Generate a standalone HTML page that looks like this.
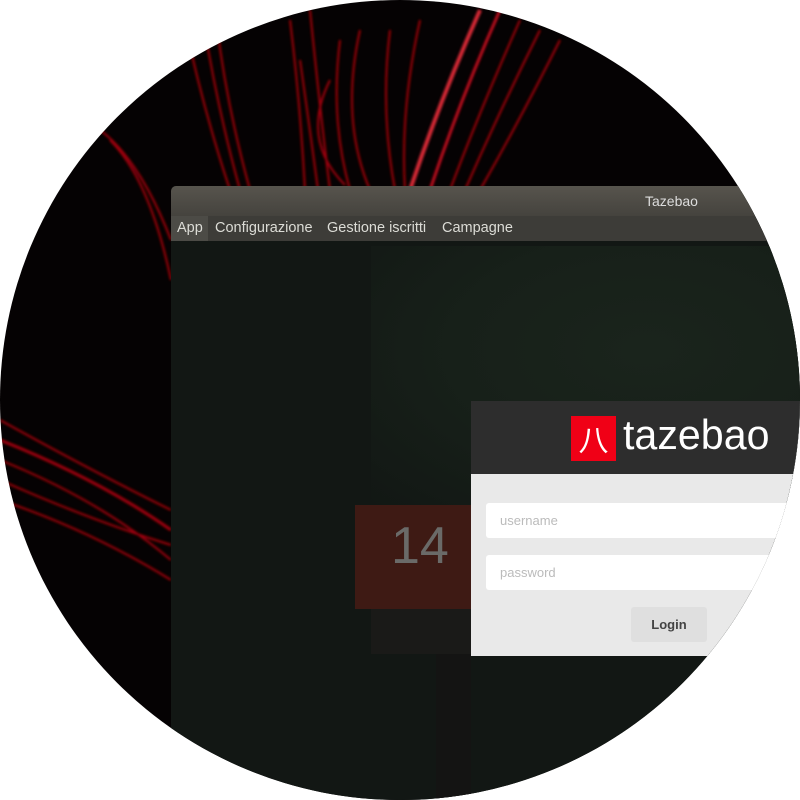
<!DOCTYPE html>
<html><head><meta charset="utf-8"><style>
html,body{margin:0;padding:0;background:#fff;width:800px;height:800px;overflow:hidden}
.c{position:absolute;left:0;top:0;width:800px;height:800px;border-radius:50%;overflow:hidden;background:#050203}
.win{position:absolute;left:171px;top:186px;width:640px;height:620px;background:#121714;border-radius:5px 5px 0 0;overflow:hidden}
.tb{height:30px;background:linear-gradient(#57544d,#45433e);color:#ddd;font:14px "Liberation Sans",sans-serif;}
.tb span{position:absolute;left:474px;top:7px}
.menu{height:25px;background:#3d3c38;color:#dcdcd6;font:14.5px "Liberation Sans",sans-serif;position:relative;z-index:2}
.menu span{position:absolute;top:4px}
.menu .app{left:0;top:0;width:37px;height:25px;background:#4c4b46}
.login{position:absolute;left:471px;top:401px;width:340px;height:255px;background:#e9e9e9}
.lh{height:73px;background:#2d2d2d;position:relative}
.logo{position:absolute;left:100px;top:15px;width:45px;height:45px;background:#f00016;color:#fff;font:30px "Noto Sans CJK SC",sans-serif;text-align:center;line-height:44px}
.lt{position:absolute;left:152px;top:10px;color:#fff;font:300 42px "Liberation Sans",sans-serif;transform:scaleX(0.98);transform-origin:left}
.in{position:absolute;left:15px;width:330px;height:35px;background:#fff;border-radius:3px;color:#bbb;font:13px "Liberation Sans",sans-serif;line-height:35px;text-indent:14px}
.btn{position:absolute;left:160px;top:206px;width:76px;height:35px;background:#dfdfdf;border-radius:3px;color:#444;font:bold 13px "Liberation Sans",sans-serif;text-align:center;line-height:35px}
</style></head><body>
<div class="c">
<svg width="800" height="800" style="position:absolute;left:0;top:0">
<defs><filter id="b"><feGaussianBlur stdDeviation="1.2"/></filter></defs>
<g fill="none" stroke="#c0000c" stroke-width="2" opacity=".85" filter="url(#b)">
<path d="M180 0 Q200 100 230 190"/><path d="M200 0 Q215 100 240 190"/><path d="M215 10 Q225 100 250 190"/>
<path d="M290 20 Q300 100 305 190"/><path d="M310 10 Q320 110 330 190"/><path d="M300 60 Q310 130 318 190"/>
<path d="M340 40 Q330 120 350 190"/><path d="M360 30 Q340 120 370 190"/><path d="M330 80 Q300 140 345 185"/>
<path d="M480 10 Q440 100 410 190" stroke="#ff3040" stroke-width="4"/>
<path d="M500 10 Q460 100 430 190" stroke="#e01020" stroke-width="3"/>
<path d="M520 20 Q480 110 450 190"/><path d="M560 40 Q520 120 480 190"/><path d="M540 30 Q500 110 465 190"/>
<path d="M390 30 Q380 110 395 190"/><path d="M420 20 Q400 110 405 190"/>
<path d="M100 130 Q140 160 171 240"/><path d="M110 140 Q150 180 171 280"/>
<path d="M0 440 Q100 480 171 530" stroke-width="3"/><path d="M0 460 Q100 500 171 560"/>
<path d="M0 500 Q90 530 171 580"/><path d="M0 420 Q90 470 171 510"/><path d="M0 480 Q90 520 171 545"/>
</g></svg>
<div class="win">
<div class="tb"><span>Tazebao</span></div>
<div class="menu"><div class="app"></div><span style="left:6px">App</span><span style="left:44px">Configurazione</span><span style="left:156px">Gestione iscritti</span><span style="left:271px">Campagne</span></div>
<div style="position:absolute;left:200px;top:60px;width:460px;height:260px;background:radial-gradient(ellipse at 60% 40%,#1a241c 0%,#172019 50%,rgba(18,23,20,0) 100%)"></div>
<div style="position:absolute;left:184px;top:319px;width:120px;height:104px;background:#3e1a14"></div>
<div style="position:absolute;left:220px;top:330px;color:#6a6a68;font:52px 'Liberation Sans Narrow','Liberation Sans',sans-serif">14</div>
<div style="position:absolute;left:200px;top:423px;width:100px;height:45px;background:#1a1a18"></div>
<div style="position:absolute;left:265px;top:468px;width:35px;height:160px;background:#141413"></div>
</div>
<div class="login">
<div class="lh"><div class="logo">八</div><div class="lt">tazebao</div></div>
<div class="in" style="top:102px">username</div>
<div class="in" style="top:154px">password</div>
<div class="btn">Login</div>
</div>
</div>
</body></html>
